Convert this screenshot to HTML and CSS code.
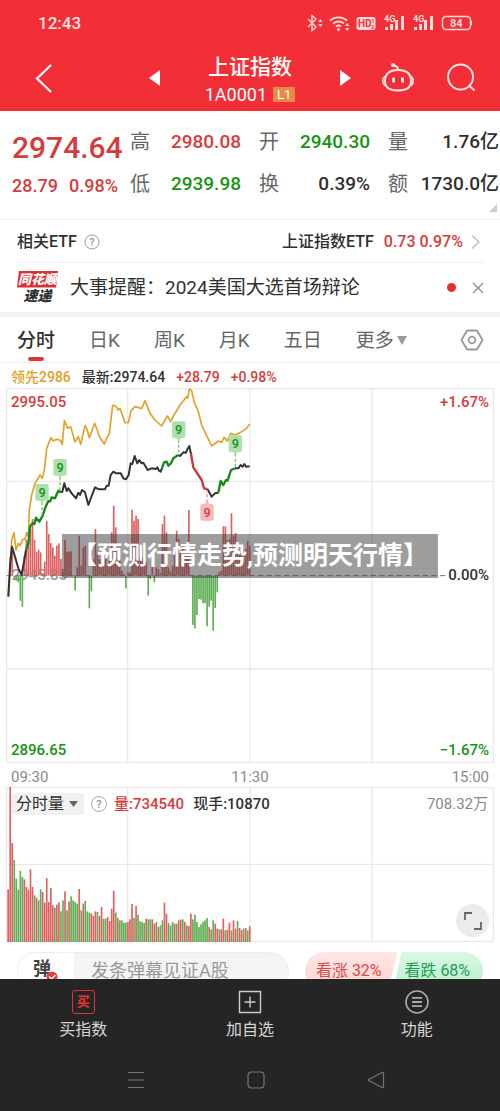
FILE: index.html
```html
<!DOCTYPE html>
<html lang="zh-CN">
<head>
<meta charset="utf-8">
<meta name="viewport" content="width=device-width, initial-scale=1">
<title>上证指数</title>
<link rel="stylesheet" href="styles.css">
</head>
<body>
<div class="page">
  <header class="top">
    <div class="status">
      <span class="clock">12:43</span>
      <svg class="status-icons" width="166" height="20" viewBox="0 0 166 20" aria-hidden="true">
        <g fill="none" stroke="#ffd9da" stroke-width="1.4">
          <path d="M2 6l8 8-4 3.500V2.500L10 6l-8 8"/>
          <path d="M24 7.500a13 13 0 0 1 17 0M27 10.500a8.500 8.500 0 0 1 11 0M30 13.500a4 4 0 0 1 5 0" stroke-width="1.800"/>
          <rect x="136.500" y="3.500" width="28" height="13" rx="3.500"/>
        </g>
        <g fill="#ffd9da">
          <path d="M12 9l2.300-3 2.300 3zM12 11l2.300 3 2.300-3zM39 13l2.200-3 2.200 3zM39 15l2.200 3 2.200-3z"/>
          <circle cx="32.500" cy="16.500" r="1.500"/>
          <rect x="50.500" y="4" width="19" height="13" rx="2.500"/>
          <path d="M79 14h3v3h-3zM84 11h3v6h-3zM89 7h3v10h-3zM95 3h3v14h-3zM108 14h3v3h-3zM113 11h3v6h-3zM118 7h3v10h-3zM124 3h3v14h-3z"/>
          <path d="M165 8h1v4h-1z"/>
        </g>
        <g class="status-text">
          <text x="52" y="14" fill="#f22f37" font-size="10">HD</text>
          <text x="65" y="10" fill="#f22f37" font-size="6">1</text>
          <text x="65" y="16" fill="#f22f37" font-size="6">2</text>
          <text x="78" y="9" fill="#ffd9da" font-size="9">4G</text>
          <text x="107" y="9" fill="#ffd9da" font-size="9">4G</text>
          <text x="144" y="14" fill="#ffd9da" font-size="11">84</text>
        </g>
      </svg>
    </div>
    <div class="title-bar">
      <button class="icon-btn" aria-label="返回"><svg width="20" height="32" viewBox="0 0 20 32"><path d="M17 3L3 16.500 17 30" fill="none" stroke="#fff" stroke-width="2.200"/></svg></button>
      <div class="stock">
        <button class="icon-btn" aria-label="上一个"><svg width="12" height="18" viewBox="0 0 12 18"><path d="M12 1v16L1 9z" fill="#fff"/></svg></button>
        <div class="stock-name">
          <h1>上证指数</h1>
          <p><span>1A0001</span><span class="level">L1</span></p>
        </div>
        <button class="icon-btn" aria-label="下一个"><svg width="12" height="18" viewBox="0 0 12 18"><path d="M0 1v16L11 9z" fill="#fff"/></svg></button>
      </div>
      <div class="actions">
        <button class="icon-btn" aria-label="智能助手"><svg width="34" height="32" viewBox="0 0 34 32" fill="none" stroke="#ffe6e6" stroke-width="2"><path d="M17 8c8 0 13 3 13 11 0 7-5 9.500-13 9.500S4 26 4 19C4 11 9 8 17 8z"/><path d="M4 14.500c-3 2-3 7 0 9M30 14.500c3 2 3 7 0 9" stroke-width="1.600"/><path d="M17 8c0-3-1.500-4-4-4.500"/><circle cx="12" cy="3" r="1" fill="#ffe6e6"/><path d="M12.500 15.500v5M21.500 15.500v5" stroke-width="3"/></svg></button>
        <button class="icon-btn" aria-label="搜索"><svg width="30" height="30" viewBox="0 0 30 30" fill="none" stroke="#ffe6e6" stroke-width="2"><circle cx="14.500" cy="14" r="12.500"/><path d="M23 22.500l5.500 5"/></svg></button>
      </div>
    </div>
  </header>

  <section class="quote">
    <div class="price">
      <strong>2974.64</strong>
      <p><span>28.79</span><span>0.98%</span></p>
    </div>
    <dl class="facts">
      <div><dt>高</dt><dd class="red">2980.08</dd></div>
      <div><dt>开</dt><dd class="green">2940.30</dd></div>
      <div><dt>量</dt><dd>1.76亿</dd></div>
      <div><dt>低</dt><dd class="green">2939.98</dd></div>
      <div><dt>换</dt><dd>0.39%</dd></div>
      <div><dt>额</dt><dd>1730.0亿</dd></div>
    </dl>
    <span class="corner"></span>
  </section>

  <a class="etf" href="#etf">
    <span>相关ETF</span>
    <svg width="16" height="16" viewBox="0 0 16 16"><circle cx="8" cy="8" r="7" fill="none" stroke="#999"/><text class="mark" x="8" y="12">?</text></svg>
    <span class="etf-name">上证指数ETF</span>
    <span class="etf-num">0.73 0.97%</span>
    <svg width="9" height="16" viewBox="0 0 9 16"><path d="M1 1.500L8 8l-7 6.500" fill="none" stroke="#bbb" stroke-width="1.300"/></svg>
  </a>

  <div class="news">
    <div class="brand"><span class="brand-top">同花顺</span><span class="brand-bottom">速递</span></div>
    <a class="headline" href="#news">大事提醒：2024美国大选首场辩论</a>
    <span class="dot"></span>
    <button class="icon-btn" aria-label="关闭"><svg width="12" height="12" viewBox="0 0 12 12"><path d="M1 1l10 10M11 1L1 11" stroke="#888" stroke-width="1.200"/></svg></button>
  </div>

  <nav class="tabs">
    <button class="tab active">分时</button>
    <button class="tab">日K</button>
    <button class="tab">周K</button>
    <button class="tab">月K</button>
    <button class="tab">五日</button>
    <button class="tab">更多<svg width="12" height="10" viewBox="0 0 12 10"><path d="M1 0h10L6 9z" fill="#999"/></svg></button>
    <button class="icon-btn settings" aria-label="设置"><svg width="24" height="22" viewBox="0 0 24 22" fill="none" stroke="#999" stroke-width="1.800"><path d="M7 1.500h10L22.500 11 17 20.500H7L1.500 11z" stroke-linejoin="round"/><circle cx="12" cy="11" r="3.400"/></svg></button>
  </nav>

  <p class="legend"><span class="lead">领先2986</span><span>最新:2974.64</span><span class="red">+28.79</span><span class="red">+0.98%</span></p>

  <section class="chart">
    <svg class="plot" viewBox="18 24 1464 1125">
      <path class="grid" d="M20 26H1480V1147H20zM383 26V1147M750 26V1147M1116 26V1147M20 304H1480M20 867H1480"/>
      <text class="base-label" x="35" y="599">2945.85</text>
      <g id="price-bars"></g>
      <path class="base-line" d="M20 587H1340"/>
      <polyline class="lead-line" points="25,650 35,480 42,458 48,510 55,490 60,497 68,478 75,478 80,458 85,470 88,390 95,345 105,310 120,285 127,295 133,270 140,205 153,173 160,183 168,178 180,180 187,193 193,122 203,145 212,140 225,185 235,170 242,193 255,137 260,145 268,173 284,130 300,173 313,192 320,175 328,160 338,76 347,78 355,90 360,85 375,128 385,128 393,92 405,80 425,85 435,62 450,100 465,120 485,138 502,108 512,125 522,105 540,75 560,50 563,55 568,27 575,32 582,65 595,95 605,135 618,163 635,198 655,183 665,187 672,172 682,183 692,160 705,165 725,155 740,145 749,132"/>
      <g class="last-line">
        <polyline points="25,650 30,560 36,500 45,530 55,565 65,585 72,545 78,510"/>
        <polyline class="up" points="78,510 85,490 90,440 97,430 103,432 108,413 118,425 125,412 128,408 135,385 145,363 150,365 155,352 165,355 175,332 183,337"/>
        <polyline points="183,337 187,335 193,310 200,333 205,325 215,340 228,355 235,338 240,345 246,330 255,337 265,375 285,322 297,328 315,328 320,317 326,317 332,285 340,275 348,280 362,280 370,295 378,298 386,285 392,250 397,252 404,228 412,250 418,240 425,250 430,248 443,270 455,265 468,267 472,262 477,272 482,275 487,262"/>
        <polyline class="up" points="487,262 492,247 500,245 505,257 513,250 520,235 535,225"/>
        <polyline points="535,225 540,228 550,217 558,218 562,208 568,198 573,222"/>
        <polyline class="down" points="573,222 580,262 595,285 605,300 612,325 622,327"/>
        <polyline points="622,327 627,335 635,350 645,340 655,338"/>
        <polyline class="up" points="655,338 662,303 670,315 678,300 683,302 693,270 705,265"/>
        <polyline points="705,265 715,265 722,255 728,260 733,252 738,260 749,259"/>
      </g>
      <g id="signals"></g>
    </svg>
    <span class="tag top-left red">2995.05</span>
    <span class="tag top-right red">+1.67%</span>
    <span class="tag mid-right">0.00%</span>
    <span class="tag bottom-left green">2896.65</span>
    <span class="tag bottom-right green">−1.67%</span>
  </section>

  <div class="times"><span>09:30</span><span>11:30</span><span>15:00</span></div>

  <section class="chart volume">
    <svg class="plot" viewBox="18 141 1464 465">
      <path class="grid" d="M20 143H1480V604H20zM383 143V604M750 143V604M1116 143V604M20 373H1480"/>
      <g id="volume-bars"></g>
    </svg>
    <div class="volume-head">
      <button class="picker">分时量<svg width="9" height="6" viewBox="0 0 9 6"><path d="M0 0h9L4.500 6z" fill="#666"/></svg></button>
      <svg width="18" height="18" viewBox="0 0 18 18"><circle cx="9" cy="9" r="7.500" fill="none" stroke="#aaa"/><text class="mark" x="9" y="13">?</text></svg>
      <span class="red">量:734540</span>
      <span>现手:10870</span>
      <span class="volume-max">708.32万</span>
    </div>
    <button class="expand" aria-label="全屏"><svg width="18" height="18" viewBox="0 0 18 18"><path d="M1 8V1h7M10 17h7v-7" fill="none" stroke="#666" stroke-width="1.800"/></svg></button>
  </section>

  <section class="comment">
    <div class="comment-box">
      <label for="barrage">弹<svg width="12" height="12" viewBox="0 0 12 12"><circle cx="6" cy="6" r="5.500" fill="#e5433b"/><path d="M3 5.500l2.500 2.500L9.500 4" fill="none" stroke="#fff" stroke-width="1.400"/></svg></label>
      <input id="barrage" type="text" placeholder="发条弹幕见证A股">
    </div>
    <div class="votes">
      <button class="vote rise">看涨 32%</button>
      <button class="vote fall">看跌 68%</button>
    </div>
  </section>

  <footer class="bottom">
    <nav class="menu">
      <a href="#buy"><span class="buy">买</span>买指数</a>
      <a href="#add"><svg width="24" height="24" viewBox="0 0 24 24" fill="none" stroke="#ccc" stroke-width="1.400"><path d="M1.500 1.500h21v21h-21zM12 6.500v11M6.500 12h11"/></svg>加自选</a>
      <a href="#more"><svg width="24" height="24" viewBox="0 0 24 24" fill="none" stroke="#aaa" stroke-width="1.600"><circle cx="12" cy="12" r="11"/><path d="M7 7.800h10M7 12h10M7 16.200h10" stroke-width="1.800"/></svg>功能</a>
    </nav>
    <div class="system">
      <button class="icon-btn" aria-label="最近任务"><svg width="18" height="18" viewBox="0 0 18 18"><path d="M1 1.500h16M1 9h16M1 16.500h16" stroke="#777" stroke-width="1.200"/></svg></button>
      <button class="icon-btn" aria-label="主屏幕"><svg width="18" height="18" viewBox="0 0 18 18"><rect x="1" y="1" width="16" height="16" rx="3.500" fill="none" stroke="#777" stroke-width="1.200"/></svg></button>
      <button class="icon-btn" aria-label="后退"><svg width="18" height="18" viewBox="0 0 18 18"><path d="M15 1.500L2 8.200q-1 .8 0 1.600l13 6.700q1.500.500 1.500-1V2.500q0-1.500-1.500-1z" fill="none" stroke="#777" stroke-width="1.200"/></svg></button>
    </div>
  </footer>

  <div class="caption">【预测行情走势,预测明天行情】</div>
</div>
<script src="chart.js"></script>
</body>
</html>
```

FILE: styles.css
```css
* { box-sizing: border-box; }
body, h1, p, dl, dd { margin: 0; }
body {
  background: #fff;
  color: #303030;
  font-family: Roboto, "Noto Sans CJK SC", sans-serif;
  font-size: 15px;
  line-height: 20px;
}
button { border: 0; padding: 0; background: none; font: inherit; color: inherit; cursor: pointer; }
a { color: inherit; text-decoration: none; }
svg { display: block; flex: none; }
.page { position: relative; min-height: 100vh; display: flex; flex-direction: column; overflow: hidden; }
.red { color: #d43c3c; }
.green { color: #159415; }
.icon-btn { display: flex; align-items: center; justify-content: center; }
.mark { font-size: 11px; text-anchor: middle; fill: #999; }

.top { background: #f22f37; color: #fff; height: 111px; }
.status { display: flex; justify-content: space-between; align-items: center; height: 44px; padding: 2px 28px 0 38px; }
.clock { font-size: 17px; color: #ffe3e3; font-weight: 500; }
.status-text { font-family: Roboto, sans-serif; font-weight: 700; }
.title-bar { display: grid; grid-template-columns: 1fr auto 1fr; align-items: center; height: 67px; padding: 0 24px; }
.title-bar > .icon-btn { justify-self: start; margin-left: 10px; }
.stock { display: flex; align-items: center; gap: 44px; }
.stock-name { width: 92px; display: flex; flex-direction: column; align-items: center; padding-top: 6px; }
h1 { font-size: 21px; line-height: 28px; font-weight: 500; white-space: nowrap; }
.stock-name p { display: flex; align-items: center; gap: 6px; font-size: 18px; line-height: 28px; }
.level { background: #e58b45; font-size: 13px; line-height: 15px; padding: 0 4px; }
.actions { display: flex; justify-content: flex-end; align-items: center; gap: 31px; }

.quote { position: relative; display: flex; height: 109px; padding: 10px 1px 0 12px; border-bottom: 1px solid #eee; }
.price { flex: 0 0 118px; color: #d43c3c; font-weight: 500; }
.price strong { display: block; font-size: 30px; line-height: 54px; font-weight: 500; }
.price p { display: flex; gap: 11px; font-size: 18px; line-height: 22px; }
.facts { flex: 1; display: grid; grid-template-columns: repeat(3, 1fr); grid-auto-rows: 42px; column-gap: 18px; font-size: 19px; }
.facts div { display: flex; justify-content: space-between; align-items: center; white-space: nowrap; }
.facts dt { font-size: 20px; color: #666; }
.facts dd { font-weight: 500; }
.corner { position: absolute; right: 3px; bottom: 7px; border-left: 8px solid transparent; border-bottom: 8px solid #ccc; }

.etf { display: flex; align-items: center; height: 43px; margin: 0 17px; padding: 2px 3px 0 0; border-bottom: 1px solid #eee; font-size: 16px; font-weight: 500; }
.etf > svg:first-of-type { margin-left: 7px; }
.etf-name { margin-left: auto; }
.etf-num { margin: 0 8px 0 10px; color: #d43c3c; }
.news { display: flex; align-items: center; height: 54px; padding: 0 16px 0 17px; border-bottom: 5px solid #f3f3f3; }
.brand { flex: none; width: 41px; margin-right: 12px; display: flex; flex-direction: column; align-items: center; font-style: italic; font-weight: 900; }
.brand-top { position: relative; width: 41px; background: #dc3034; color: #fff; font-size: 13px; line-height: 17px; text-align: center; clip-path: polygon(2px 0, 100% 0, 39px 100%, 0 100%); white-space: nowrap; }
.brand-bottom { font-size: 14px; line-height: 17px; }
.headline { flex: 1; font-size: 19px; line-height: 28px; white-space: nowrap; }
.dot { width: 9px; height: 9px; margin-right: 16px; border-radius: 50%; background: #e03030; }

.tabs { display: flex; align-items: center; gap: 34px; height: 46px; padding: 0 16px 0 17px; border-bottom: 1px solid #eee; font-size: 19px; color: #666; }
.tab { position: relative; display: flex; align-items: center; gap: 2px; height: 45px; padding-top: 2px; white-space: nowrap; }
.tab.active { color: #303030; font-weight: 500; }
.tab.active::after { content: ""; position: absolute; left: 11px; right: 11px; bottom: 1px; height: 4px; border-radius: 2px; background: #d43c3c; }
.settings { margin-left: auto; }
.legend { display: flex; align-items: center; gap: 11px; height: 25px; padding: 2px 11px 0; font-size: 14px; font-weight: 500; white-space: nowrap; }
.lead { color: #e0a020; }

.chart { position: relative; margin: 0 6px; }
.plot { width: 100%; height: auto; }
.grid { fill: none; stroke: #e9e9e9; stroke-width: 4; }
.base-line { stroke: #777; stroke-width: 3; stroke-dasharray: 16 10; }
.base-label { font-size: 45px; fill: #999; font-weight: 500; }
.lead-line { fill: none; stroke: #dfa32c; stroke-width: 5; stroke-linejoin: round; }
.last-line { fill: none; stroke: #333; stroke-width: 6; stroke-linejoin: round; }
.last-line .up { stroke: #158a15; stroke-width: 7; }
.last-line .down { stroke: #c9383c; stroke-width: 7; }
.bar-up { fill: #df6060; }
.bar-down { fill: #5fae55; }
.signal-box { fill: #afdfaf; }
.signal-stem { stroke: #7cc07c; stroke-width: 4; stroke-dasharray: 9 6; }
.signal-text { fill: #159415; font-size: 38px; font-weight: 500; text-anchor: middle; }
.sell .signal-box { fill: #f6b9b9; }
.sell .signal-stem { stroke: #e09090; }
.sell .signal-text { fill: #d43c3c; }
.tag { position: absolute; font-weight: 500; }
.top-left { left: 5px; top: 4px; }
.top-right { right: 5px; top: 4px; }
.mid-right { right: 5px; top: 50%; margin-top: -11px; }
.bottom-left { left: 5px; bottom: 3px; }
.bottom-right { right: 5px; bottom: 3px; }
.times { display: grid; grid-template-columns: 1fr auto 1fr; align-items: center; height: 24px; padding: 4px 11px 0; color: #888; }
.times span:last-child { text-align: right; }
.volume-head { position: absolute; top: 6px; left: 6px; right: 6px; display: flex; align-items: center; gap: 6px; font-weight: 500; white-space: nowrap; }
.picker { display: flex; align-items: center; gap: 5px; height: 22px; padding: 0 6px 0 4px; border-radius: 2px; background: #f1f1f1; font-size: 16px; font-weight: 400; }
.volume-head .red { margin-right: 3px; }
.volume-max { margin-left: auto; color: #888; font-weight: 400; }
.expand { position: absolute; right: 5px; bottom: 5px; width: 33px; height: 33px; display: flex; align-items: center; justify-content: center; border-radius: 50%; background: #ebebeb; }

.comment { display: flex; align-items: flex-start; gap: 16px; height: 37px; padding: 10px 17px 0; overflow: hidden; }
.comment-box { flex: 1; display: flex; height: 38px; border: 1px solid #eee; border-radius: 19px; background: #f4f4f4; overflow: hidden; }
.comment-box label { position: relative; flex: 0 0 56px; padding: 6px 0 0 15px; background: #fff; color: #444; font-size: 18px; line-height: 20px; font-weight: 700; }
.comment-box label svg { position: absolute; left: 28px; top: 18px; }
.comment-box input { flex: 1; min-width: 0; border: 0; padding: 0 17px; background: none; font: inherit; font-size: 18px; }
.comment-box input::placeholder { color: #999; opacity: 1; }
.votes { display: flex; flex: 0 0 178px; }
.vote { flex: 1; height: 38px; font-size: 16px; white-space: nowrap; }
.rise { margin-right: -4px; padding-right: 5px; border-radius: 19px 0 0 19px; background: linear-gradient(#ffe6e6, #ffd2d2); color: #dc4a45; clip-path: polygon(0 0, 100% 0, 90% 100%, 0 100%); }
.fall { padding-right: 2px; border-radius: 0 19px 19px 0; background: linear-gradient(#dcf8e6, #b4eeca); color: #1fa050; clip-path: polygon(8px 0, 100% 0, 100% 100%, 0 100%); }

.bottom { flex: 1; background: #252525; color: #d5d5d5; }
.menu { display: grid; grid-template-columns: repeat(3, 1fr); padding-top: 11px; }
.menu a { display: flex; flex-direction: column; align-items: center; gap: 4px; font-size: 16px; line-height: 24px; }
.buy { width: 23px; height: 24px; border: 1px solid #e03038; border-radius: 3px; color: #f03038; font-size: 13px; line-height: 21px; font-weight: 700; text-align: center; }
.system { display: flex; justify-content: center; gap: 102px; padding: 29px 0 22px 12px; }

.caption { position: absolute; left: 50%; top: 50%; transform: translate(-50%, -50%); padding: 0 10px; background: rgba(60, 60, 60, 0.5); color: #fff; font-size: 25px; line-height: 44px; font-weight: 700; white-space: nowrap; }
```

FILE: chart.js
```js
const SVG = "http://www.w3.org/2000/svg";
const START = 24;
const STEP = 6.09;

function add(parent, tag, attrs, text) {
  const el = document.createElementNS(SVG, tag);
  for (const key in attrs) el.setAttribute(key, attrs[key]);
  if (text) el.textContent = text;
  parent.appendChild(el);
  return el;
}

// Positive values rise above the base line, negative ones fall below it.
const flow = [0,55,80,-5,-15,-20,-75,-93,60,108,105,140,170,108,72,78,70,5,42,165,
  125,98,85,60,90,97,50,15,108,72,72,73,2,-45,25,120,30,85,90,0,
  -98,-47,50,140,70,50,40,60,60,30,60,130,210,145,80,50,15,5,-38,10,
  10,198,165,180,170,60,55,70,40,-60,-10,30,-20,25,20,8,155,180,130,25,
  12,30,85,135,110,95,90,70,75,197,0,-148,-158,-118,-70,-72,-83,-82,-152,-93,
  -75,-165,-97,-50,10,15,148,148,105,110,187,120,128,80,70,60,75,80,105,90];
const volume = [158,466,297,-246,-190,-157,-213,-195,188,165,157,218,165,-140,133,-125,-158,150,118,192,
  120,162,110,-103,112,119,-92,-125,152,-95,122,-137,-125,-120,-115,159,-95,115,-123,-92,
  -88,85,78,92,-90,78,105,-70,-70,75,63,100,154,-88,73,-65,-65,-58,-58,60,
  68,114,-72,108,-82,-62,-60,-57,70,-68,-68,68,55,-60,45,-50,-65,118,85,-57,
  -50,-60,55,-55,65,67,-68,60,-50,48,85,-68,-82,-60,-45,-53,-60,-65,-72,45,
  -38,-65,55,40,-38,38,70,-35,37,58,-35,65,40,-63,42,36,-40,42,-35,47];

const priceBars = document.getElementById("price-bars");
flow.forEach((v, i) => add(priceBars, "rect", {
  class: v < 0 ? "bar-down" : "bar-up",
  x: START + i * STEP - 2, y: v < 0 ? 587 : 587 - v, width: 5, height: Math.abs(v)
}));

const volumeBars = document.getElementById("volume-bars");
volume.forEach((v, i) => add(volumeBars, "rect", {
  class: v < 0 ? "bar-down" : "bar-up",
  x: START + i * STEP - 2, y: 606 - Math.abs(v), width: 5, height: Math.abs(v)
}));

const signals = document.getElementById("signals");
[
  { x: 126, y: 337, end: 408 },
  { x: 180, y: 262, end: 330 },
  { x: 536, y: 149, end: 224 },
  { x: 706, y: 191, end: 264 },
  { x: 621, y: 397, end: 330, sell: true }
].forEach(s => {
  const g = add(signals, "g", { class: s.sell ? "sell" : "buy-signal" });
  add(g, "path", { class: "signal-stem", d: `M${s.x} ${s.y}V${s.end}` });
  add(g, "rect", { class: "signal-box", x: s.x - 20, y: s.y - 25, width: 40, height: 50, rx: 6 });
  const tip = s.sell ? `M${s.x - 8} ${s.y - 24}l8-9 8 9z` : `M${s.x - 8} ${s.y + 24}l8 9 8-9z`;
  add(g, "path", { class: "signal-box", d: tip });
  add(g, "text", { class: "signal-text", x: s.x, y: s.y + 13 }, "9");
});
```
